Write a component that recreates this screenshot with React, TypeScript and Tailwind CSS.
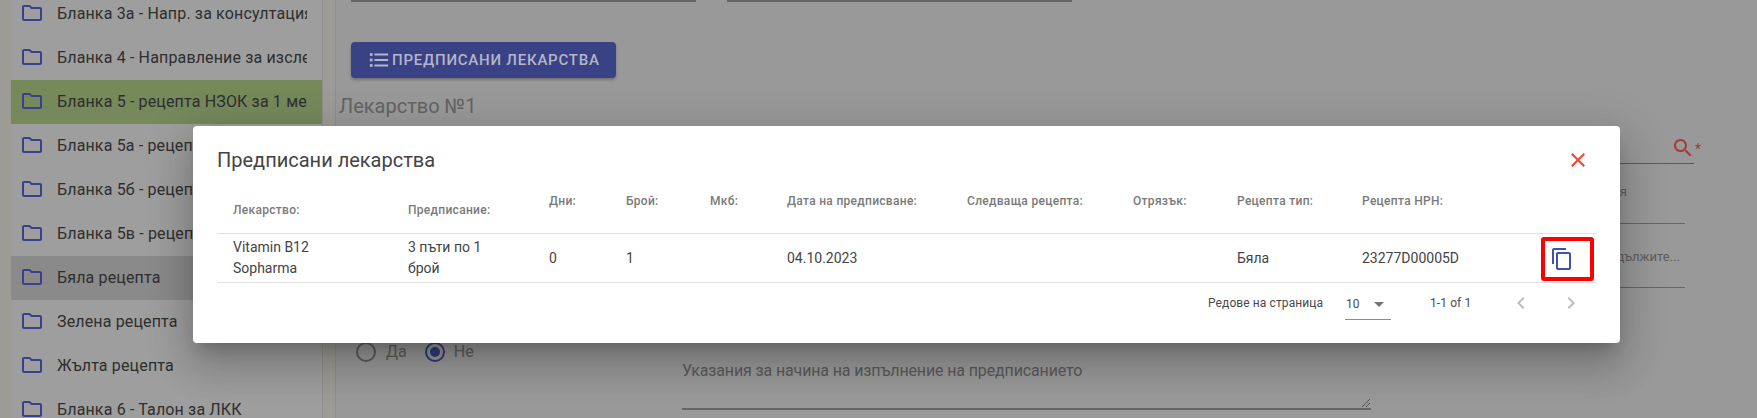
import React from "react";

const FolderIcon = () => (
  <svg viewBox="0 0 24 24" className="w-6 h-6 shrink-0 fill-[#3a408e] -mt-[2px] -ml-[1px]">
    <path d="M9.17 6l2 2H20v10H4V6h5.17M10 4H4c-1.1 0-1.99.9-1.99 2L2 18c0 1.1.9 2 2 2h16c1.1 0 2-.9 2-2V8c0-1.1-.9-2-2-2h-8l-2-2z" />
  </svg>
);

const items = [
  { t: "Бланка 3а - Напр. за консултация или", c: "" },
  { t: "Бланка 4 - Направление за изследвания", c: "" },
  { t: "Бланка 5 - рецепта НЗОК за 1 месец", c: "bg-[#75895b]" },
  { t: "Бланка 5а - рецепта НЗОК за 2 месеца", c: "" },
  { t: "Бланка 5б - рецепта НЗОК за 3 месеца", c: "" },
  { t: "Бланка 5в - рецепта НЗОК за 1 месец", c: "" },
  { t: "Бяла рецепта", c: "bg-[#8a8a8a]" },
  { t: "Зелена рецепта", c: "" },
  { t: "Жълта рецепта", c: "" },
  { t: "Бланка 6 - Талон за ЛКК", c: "" },
];

const cols = "grid grid-cols-[175px_141px_77px_84px_77px_180px_166px_104px_125px_1fr]";

const heads = ["Лекарство:", "Предписание:", "Дни:", "Брой:", "Мкб:", "Дата на предписване:", "Следваща рецепта:", "Отрязък:", "Рецепта тип:", "Рецепта НРН:"];

export default function App() {
  return (
    <div className="relative h-[418px] w-full overflow-hidden flex bg-[#9c9b96] font-['Roboto','Liberation_Sans',sans-serif]">
      <aside className="ml-[11px] w-[312px] shrink-0 -mt-2 h-[440px] bg-[#9e9e9e] border-r border-[#8f8f8f]">
        {items.map((it) => (
          <div key={it.t} className={`h-11 flex items-center pl-[10px] ${it.c}`}>
            <FolderIcon />
            <span className="ml-[13px] w-[250px] overflow-hidden whitespace-nowrap text-[16px] tracking-[0.15px] text-[#2e2e2e]">{it.t}</span>
          </div>
        ))}
      </aside>

      <main className="ml-3 flex-1 min-w-0 bg-[#999999] border-l border-[#8f8f8f]">
        <div className="flex gap-[31px] pl-[15px]">
          <div className="w-[345px] h-[2px] bg-[#666666]" />
          <div className="w-[345px] h-[2px] bg-[#666666]" />
        </div>
        <button className="ml-[15px] mt-10 h-9 w-[265px] flex items-center gap-[2px] pl-[17px] rounded bg-[#3a4286] text-[#b4b6c6] text-[15px] font-medium tracking-[0.77px] shadow-[0_2px_3px_rgba(0,0,0,0.25)]">
          <svg viewBox="0 0 24 24" className="w-[22px] h-[22px] fill-[#b4b6c6] shrink-0">
            <path d="M7 5h15v2H7zM7 11h15v2H7zM7 17h15v2H7z" />
            <rect x="2" y="4.5" width="3" height="3" />
            <rect x="2" y="10.5" width="3" height="3" />
            <rect x="2" y="16.5" width="3" height="3" />
          </svg>
          ПРЕДПИСАНИ ЛЕКАРСТВА
        </button>
        <h2 className="ml-[3px] mt-[14px] text-[20px] leading-7 font-normal text-[#636363]">Лекарство №1</h2>

        <div className="flex justify-end pr-[54px] h-[44px]">
          <div className="w-[500px] h-[44px] border-b border-[#a03c3c] flex items-center justify-end">
            <svg viewBox="0 0 24 24" className="w-6 h-6 fill-[#a03c3c] mt-[12px] -mr-[1px]">
              <path d="M15.5 14h-.79l-.28-.27C15.41 12.59 16 11.11 16 9.5 16 5.91 13.09 3 9.5 3S3 5.91 3 9.5 5.91 16 9.5 16c1.61 0 3.09-.59 4.23-1.57l.27.28v.79l5 4.99L20.49 19l-4.99-5zm-6 0C7.01 14 5 11.99 5 9.5S7.01 5 9.5 5 14 7.01 14 9.5 11.99 14 9.5 14z" />
            </svg>
          </div>
          <span className="w-2 ml-[1px] text-[14px] leading-none mt-[22px] text-[#a03c3c]">*</span>
        </div>

        <div className="flex justify-end pr-[72px] h-[60px]">
          <div className="w-[500px] h-[60px] border-b border-[#666666] text-right pr-[58px] pt-[20px] text-[13px] leading-4 text-[#5e5e5e]">Доза за приложения</div>
        </div>
        <div className="flex justify-end pr-[72px] h-[64px]">
          <div className="w-[500px] h-[64px] border-b border-[#666666] text-right pr-[5px] pt-[25px] text-[13px] leading-4 text-[#5e5e5e]">Моля продължите...</div>
        </div>

        <div className="flex mt-[54px]">
          <div className="pl-[20px] w-[346px] shrink-0 flex items-center h-5 text-[16px] text-[#5e5e5e]">
            <span className="w-5 h-5 rounded-full border-2 border-[#5e5e5e]" />
            <span className="ml-[10px]">Да</span>
            <span className="ml-[18px] w-5 h-5 rounded-full border-2 border-[#343c7e] flex items-center justify-center">
              <span className="w-[10px] h-[10px] rounded-full bg-[#343c7e]" />
            </span>
            <span className="ml-[9px]">Не</span>
          </div>
          <div className="relative w-[689px] h-[68px] pt-[17px] border-b-2 border-[#666666] text-[16px] leading-6 tracking-[-0.13px] text-[#5a5a5a]">
            Указания за начина на изпълнение на предписанието
            <svg viewBox="0 0 10 10" className="absolute right-0 bottom-0 w-[10px] h-[10px] stroke-[#555555]">
              <path d="M9 1L1 9M9 5L5 9" strokeWidth="1" />
            </svg>
          </div>
        </div>
      </main>

      <section className="absolute left-[193px] top-[126px] w-[1427px] h-[217px] rounded bg-white shadow-[0_11px_15px_-7px_rgba(0,0,0,0.2),0_24px_38px_3px_rgba(0,0,0,0.14),0_9px_46px_8px_rgba(0,0,0,0.12)] px-6">
        <header className="flex items-center justify-between h-[68px]">
          <h1 className="text-[20px] font-normal text-[#444444]">Предписани лекарства</h1>
          <button className="mr-[6px]">
            <svg viewBox="0 0 24 24" className="w-6 h-6 fill-[#f44336]">
              <path d="M19 6.41L17.59 5 12 10.59 6.41 5 5 6.41 10.59 12 5 17.59 6.41 19 12 13.41 17.59 19 19 17.59 13.41 12z" />
            </svg>
          </button>
        </header>

        <div className={`${cols} -mt-[2px] h-[42px] border-b border-[#e0e0e0] text-[12px] font-medium tracking-[0.3px] text-[#7a7a7a]`}>
          {heads.map((h, i) => (
            <div key={h} className={`pl-4 whitespace-nowrap ${i < 2 ? "pt-[9px]" : ""}`}>{h}</div>
          ))}
        </div>

        <div className={`${cols} h-[49px] border-b border-[#e0e0e0] text-[14px] text-[#444444] items-center`}>
          <div className="pl-4 leading-[21px]">Vitamin B12<br />Sopharma</div>
          <div className="pl-4 leading-[21px]">3 пъти по 1<br />брой</div>
          <div className="pl-4">0</div>
          <div className="pl-4">1</div>
          <div className="pl-4" />
          <div className="pl-4">04.10.2023</div>
          <div className="pl-4" />
          <div className="pl-4" />
          <div className="pl-4">Бяла</div>
          <div className="pl-4 flex items-center justify-between">
            <span>23277D00005D</span>
          </div>
        </div>

        <div className="flex items-center h-[40px] text-[12px] tracking-[0.1px] text-[#4a4a4a]">
          <span className="ml-[991px] w-[137px]">Редове на страница</span>
          <div className="relative w-[46px] h-[32px] border-b border-[#8c8c8c] flex items-center pl-[1px] mt-[2px]">
            10
            <svg viewBox="0 0 24 24" className="absolute right-0 top-[4px] w-6 h-6 fill-[#757575]">
              <path d="M7 10l5 5 5-5z" />
            </svg>
          </div>
          <span className="ml-[39px]">1-1 of 1</span>
          <svg viewBox="0 0 24 24" className="ml-[38px] w-6 h-6 fill-[#bdbdbd]">
            <path d="M15.41 7.41L14 6l-6 6 6 6 1.41-1.41L10.83 12z" />
          </svg>
          <svg viewBox="0 0 24 24" className="ml-[26px] w-6 h-6 fill-[#bdbdbd]">
            <path d="M10 6L8.59 7.41 13.17 12l-4.58 4.59L10 18l6-6z" />
          </svg>
        </div>

        <button className="absolute left-[1348px] top-[111px] w-[53px] h-[44px] rounded-[3px] border-4 border-[#ff0000] flex items-center justify-start pl-[5px] bg-white">
          <svg viewBox="0 0 24 24" className="w-6 h-6 fill-[#3f51b5]">
            <path d="M16 1H4c-1.1 0-2 .9-2 2v14h2V3h12V1zm3 4H8c-1.1 0-2 .9-2 2v14c0 1.1.9 2 2 2h11c1.1 0 2-.9 2-2V7c0-1.1-.9-2-2-2zm0 16H8V7h11v14z" />
          </svg>
        </button>
      </section>
    </div>
  );
}
